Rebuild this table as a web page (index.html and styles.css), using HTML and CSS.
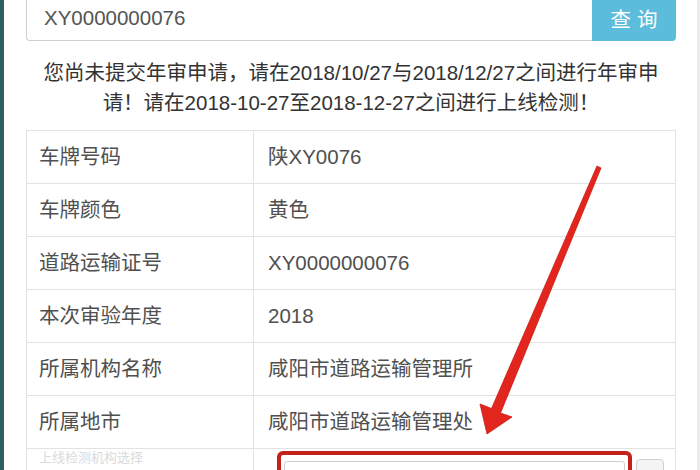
FILE: index.html
```html
<!DOCTYPE html>
<html lang="zh-CN">
<head>
<meta charset="utf-8">
<title>年审查询</title>
<link rel="stylesheet" href="styles.css">
</head>
<body>
<div class="page">
  <div class="main">
    <div class="search">
      <div class="search-input">XY0000000076</div>
      <div class="search-btn">查询</div>
    </div>
    <p class="notice">您尚未提交年审申请，请在2018/10/27与2018/12/27之间进行年审申<br>请！请在2018-10-27至2018-12-27之间进行上线检测！</p>
    <table class="info">
      <tr><td class="label">车牌号码</td><td>陕XY0076</td></tr>
      <tr><td class="label">车牌颜色</td><td>黄色</td></tr>
      <tr><td class="label">道路运输证号</td><td>XY0000000076</td></tr>
      <tr><td class="label">本次审验年度</td><td>2018</td></tr>
      <tr><td class="label">所属机构名称</td><td>咸阳市道路运输管理所</td></tr>
      <tr><td class="label">所属地市</td><td>咸阳市道路运输管理处</td></tr>
      <tr class="last">
        <td class="label faded">上线检测机构选择</td>
        <td class="pick">
          <div class="pick-row">
            <div class="highlight"><div class="select"></div></div>
            <div class="mini-btn"></div>
          </div>
        </td>
      </tr>
    </table>
  </div>
  <svg class="arrow" width="700" height="470" viewBox="0 0 700 470">
    <polygon points="487,434 480,404 491.5,408.5 597,166 601,168 500.5,413 512,417" fill="#e3261d" stroke="#c81c14" stroke-width="0.8" stroke-linejoin="round"/>
  </svg>
</div>
</body>
</html>
```

FILE: styles.css
```css
html, body {
  margin: 0;
  padding: 0;
  background: #fff;
}

.page {
  position: relative;
  width: 700px;
  height: 470px;
  overflow: hidden;
  box-sizing: border-box;
  border-left: 4px solid #2c5f65;
  border-right: 3px solid #ececec;
  font-family: "Liberation Sans", "Noto Sans CJK SC", sans-serif;
  font-size: 20.5px;
}

.main {
  width: 650px;
  padding-left: 22px;
}

.search {
  display: flex;
  height: 47px;
  margin-top: -6px;
}

.search-input {
  flex: 1;
  box-sizing: border-box;
  border: 1px solid #cfcfcf;
  border-right: none;
  border-radius: 0 0 0 4px;
  padding-left: 17px;
  display: flex;
  align-items: center;
  color: #555;
  padding-top: 1px;
}

.search-btn {
  width: 84px;
  background: #5bbcdb;
  color: #fff;
  border-radius: 0 0 4px 0;
  display: flex;
  align-items: center;
  justify-content: center;
  letter-spacing: 6px;
  padding-left: 6px;
  box-sizing: border-box;
  padding-top: 1px;
}

.notice {
  margin: 17px 0 12px;
  text-align: center;
  line-height: 30px;
  color: #333;
}

.info {
  width: 650px;
  border-collapse: collapse;
  border: 1px solid #dedede;
  color: #505050;
}

.info td {
  height: 53px;
  padding: 0 14px;
  border: 1px solid #e2e2e2;
  box-sizing: border-box;
  vertical-align: middle;
  line-height: 30px;
}

.info td.label {
  width: 227px;
  padding-left: 12px;
}

.info td.faded {
  color: #dadada;
  vertical-align: top;
  padding-top: 2px;
  font-size: 13px;
  line-height: 14px;
}

.info td.pick {
  vertical-align: top;
  padding: 2px 0 0 23px;
}

.pick-row {
  display: flex;
  align-items: flex-start;
  gap: 4px;
}

.highlight {
  width: 355px;
  height: 40px;
  box-sizing: border-box;
  border: 4px solid #c4211b;
  border-radius: 6px;
  padding: 6px 3px 0;
}

.select {
  height: 30px;
  border: 1px solid #cfcfcf;
  border-radius: 3px;
}

.mini-btn {
  margin-top: 8px;
  width: 26px;
  height: 30px;
  border: 1px solid #d0d0d0;
  border-radius: 4px;
  background: #f4f4f4;
}

.arrow {
  position: absolute;
  left: -4px;
  top: 0;
  pointer-events: none;
}
```
